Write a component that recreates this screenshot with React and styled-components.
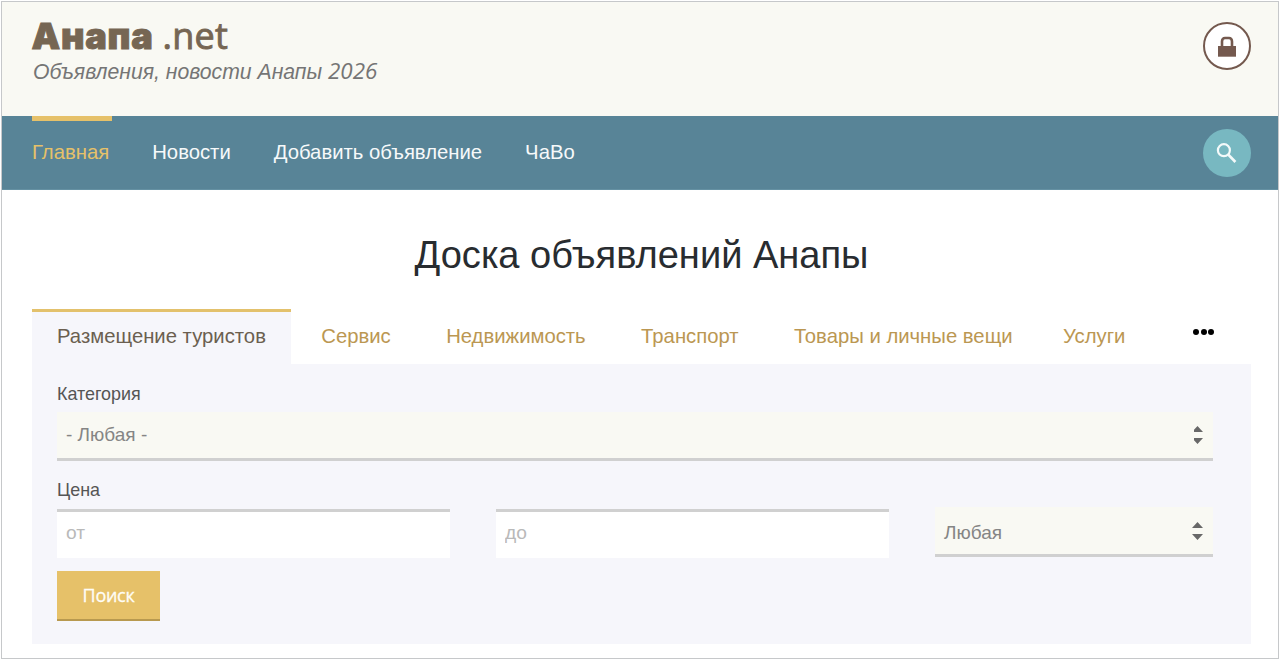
import React from "react";
import styled, { createGlobalStyle } from "styled-components";

const GlobalStyle = createGlobalStyle`
  * { box-sizing: border-box; }
  body { margin: 0; background: #fff; font-family: "Liberation Sans", Arial, sans-serif; }
`;

const Page = styled.div`
  width: 1278px;
  height: 658px;
  margin: 1px 1px 0;
  border: 1px solid #c6c8ca;
  background: #fff;
  overflow: hidden;
`;

const Header = styled.header`
  display: flex;
  justify-content: space-between;
  align-items: flex-start;
  height: 114px;
  padding: 20px 27px 0 30px;
  background: #f9f9f3;
`;

const Brand = styled.div`
  display: flex;
  flex-direction: column;
`;

const SiteName = styled.div`
  display: flex;
  align-items: baseline;
  gap: 9px;
  height: 36px;
  margin-top: -6px;
  color: #766653;
  font-family: "Open Sans", sans-serif;
  font-size: 36px;
  line-height: 40px;
  letter-spacing: 0.3px;
  -webkit-text-stroke: 0.9px #766653;
`;

const SiteNameStrong = styled.strong`
  margin-left: -0.5px;
  font-family: Inter, sans-serif;
  font-size: 36.2px;
  font-weight: 900;
  letter-spacing: 0.7px;
`;

const Slogan = styled.div`
  padding-left: 1px;
  color: #757575;
  font-size: 21.2px;
  font-style: italic;
  line-height: 38px;
  white-space: nowrap;
`;

const Year = styled.span`
  font-family: "Open Sans", sans-serif;
  font-size: 22.4px;
`;

const RoundButton = styled.button`
  display: flex;
  align-items: center;
  justify-content: center;
  width: 48px;
  height: 48px;
  padding: 0;
  border-radius: 50%;
  border: ${(p) => (p.$outlined ? "2.5px solid #74594e" : "0")};
  background: ${(p) => (p.$outlined ? "#fff" : "#78b8c1")};
  color: ${(p) => (p.$outlined ? "#74594e" : "#f4fafa")};
`;

const Nav = styled.nav`
  display: flex;
  justify-content: space-between;
  height: 74px;
  padding: 0 27.5px 0 30px;
  background: #588497;
  border-bottom: 1px solid #6591a3;
`;

const NavList = styled.div`
  display: flex;
  gap: 40px;
`;

const NavItem = styled.a`
  padding-right: 3px;
  border-top: 5px solid ${(p) => (p.$active ? "#e6c169" : "transparent")};
  color: ${(p) => (p.$active ? "#e6c169" : "#f6f9fa")};
  font-size: 20.3px;
  line-height: 62px;
  white-space: nowrap;
`;

const NavAction = styled.div`
  padding-top: 13px;
`;

const Main = styled.main`
  padding: 0 27px 0 30px;
`;

const Title = styled.h1`
  margin: 0;
  height: 119px;
  padding-top: 35px;
  color: #282c30;
  font-size: 38.05px;
  font-weight: 400;
  line-height: 60px;
  text-align: center;
`;

const Tabs = styled.div`
  display: flex;
  gap: 5px;
  height: 55px;
`;

const Tab = styled.a`
  padding: 0 25.4px 0 25px;
  border-top: 3px solid ${(p) => (p.$active ? "#e3c16c" : "transparent")};
  background: ${(p) => (p.$active ? "#f6f6fb" : "transparent")};
  color: ${(p) => (p.$active ? "#6b5f50" : "#bb9752")};
  font-size: 20.3px;
  line-height: 48px;
  white-space: nowrap;

  &:nth-child(6) {
    margin-left: -5px;
  }
`;

const MoreTabs = styled.div`
  display: flex;
  gap: 1.5px;
  margin-left: auto;
  padding: 20px 37px 0 0;
`;

const Dot = styled.i`
  width: 6px;
  height: 6px;
  border-radius: 50%;
  background: #000;
`;

const Panel = styled.form`
  height: 280px;
  padding: 18px 38px 0 25px;
  background: #f6f6fb;
`;

const Label = styled.div`
  height: ${(p) => p.$height};
  padding-top: ${(p) => p.$top || 0};
  color: #555;
  font-size: 17.9px;
  line-height: 24px;
`;

const SelectBox = styled.div`
  display: flex;
  justify-content: space-between;
  height: ${(p) => p.$height};
  padding: 0 ${(p) => p.$right} 0 9px;
  border-bottom: 3px solid #d0d0d0;
  background: #f9f9f3;
  color: #858585;
  font-size: 19px;
  line-height: ${(p) => p.$line};
`;

const ArrowSlot = styled.span`
  padding-top: ${(p) => p.$top};
  line-height: 0;
  color: #686868;
`;

const PriceRow = styled.div`
  display: grid;
  grid-template-columns: 393px 393px 278px;
  column-gap: 46px;
  align-items: start;
`;

const PriceInput = styled.input`
  width: 100%;
  height: 49px;
  margin-top: 2px;
  padding: 0 9px 5px;
  border: 0;
  border-top: 3px solid #d0d0d0;
  background: #fff;
  font-family: inherit;
  font-size: 19.2px;
  &::placeholder { color: #b9b9b9; opacity: 1; }
`;

const SubmitButton = styled.button`
  display: block;
  width: 103px;
  height: 50px;
  margin-top: 13px;
  padding: 0;
  border: 0;
  border-bottom: 2px solid #b8994f;
  background: #e6c169;
  color: #fffdf6;
  font-family: "Open Sans", sans-serif;
  font-size: 18px;
  font-weight: 500;
  letter-spacing: -0.3px;
  line-height: 48px;
  -webkit-text-stroke: 0.3px #fffdf6;
`;

const LockIcon = () => (
  <svg width="18" height="22" viewBox="0 0 18 22" fill="none" stroke="currentColor">
    <path d="M4 12V6.500C4 4 5.300 3 7 3h4c1.700 0 3 1 3 3.500V12" strokeWidth="2.600" />
    <path d="M0 11h18v10.700H0z" fill="currentColor" stroke="none" />
  </svg>
);

const SearchIcon = () => (
  <svg width="24" height="24" viewBox="0 0 24 24" fill="none" stroke="currentColor" strokeWidth="2.200">
    <circle cx="8.900" cy="9.200" r="6" />
    <path d="M13.100 13.400 20.400 21" strokeWidth="2.700" />
  </svg>
);

const SortArrows = ({ compact }) => (
  <svg width={compact ? 9 : 11} height="18" viewBox={compact ? "2 0 9 18" : "0 0 11 18"} fill="currentColor">
    <path d="M0 6 5.500 0 11 6zM0 12h11l-5.500 6z" />
  </svg>
);

const NAV = ["Главная", "Новости", "Добавить объявление", "ЧаВо"];
const TABS = ["Размещение туристов", "Сервис", "Недвижимость", "Транспорт", "Товары и личные вещи", "Услуги"];

export default function App() {
  return (
    <>
      <GlobalStyle />
      <Page>
        <Header>
          <Brand>
            <SiteName>
              <SiteNameStrong>Анапа</SiteNameStrong>
              <span>.net</span>
            </SiteName>
            <Slogan>
              Объявления, новости Анапы <Year>2026</Year>
            </Slogan>
          </Brand>
          <RoundButton $outlined aria-label="Вход">
            <LockIcon />
          </RoundButton>
        </Header>
        <Nav>
          <NavList>
            {NAV.map((name, i) => (
              <NavItem key={name} $active={i === 0}>{name}</NavItem>
            ))}
          </NavList>
          <NavAction>
            <RoundButton aria-label="Поиск по сайту">
              <SearchIcon />
            </RoundButton>
          </NavAction>
        </Nav>
        <Main>
          <Title>Доска объявлений Анапы</Title>
          <Tabs>
            {TABS.map((name, i) => (
              <Tab key={name} $active={i === 0}>{name}</Tab>
            ))}
            <MoreTabs>
              <Dot />
              <Dot />
              <Dot />
            </MoreTabs>
          </Tabs>
          <Panel>
            <Label $height="30px">Категория</Label>
            <SelectBox $height="49px" $right="10.5px" $line="45px">
              - Любая -
              <ArrowSlot $top="14px"><SortArrows compact /></ArrowSlot>
            </SelectBox>
            <Label $height="46px" $top="17px">Цена</Label>
            <PriceRow>
              <PriceInput placeholder="от" />
              <PriceInput placeholder="до" />
              <SelectBox $height="50px" $right="10.5px" $line="51px">
                Любая
                <ArrowSlot $top="15px"><SortArrows /></ArrowSlot>
              </SelectBox>
            </PriceRow>
            <SubmitButton type="button">Поиск</SubmitButton>
          </Panel>
        </Main>
      </Page>
    </>
  );
}
